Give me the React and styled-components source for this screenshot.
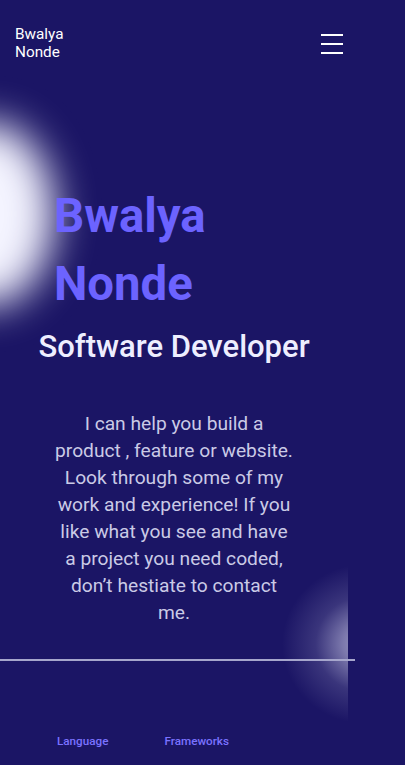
import React from "react"
import styled, { createGlobalStyle } from "styled-components"

// Global page styles:
const GlobalStyle = createGlobalStyle`
  html, body {
    margin: 0;
    padding: 0;
    background: #1b1565;
    overflow-x: hidden;
  }

  body {
    font-family: Roboto, "Liberation Sans", sans-serif;
    -webkit-font-smoothing: antialiased;
  }
`

const App = () => {
  return (
    <>
      <GlobalStyle />
      <Page>
        <GlowLeft />
        <GlowRight />
        <Header>
          <Logo>
            Bwalya
            <br />
            Nonde
          </Logo>
          <MenuButton aria-label="menu">
            <svg width="22" height="22" viewBox="0 0 22 22">
              <rect x="0" y="2" width="22" height="2" fill="#ffffff" />
              <rect x="0" y="11" width="22" height="2" fill="#ffffff" />
              <rect x="0" y="20" width="22" height="2" fill="#ffffff" />
            </svg>
          </MenuButton>
        </Header>

        <Hero>
          <Name>
            Bwalya
            <br />
            Nonde
          </Name>
          <Role>Software Developer</Role>
          <Intro>
            I can help you build a product , feature or website. Look through
            some of my work and experience! If you like what you see and have a
            project you need coded, don’t hestiate to contact me.
          </Intro>
        </Hero>

        <Divider />

        <Tabs>
          <Tab>Language</Tab>
          <Tab>Frameworks</Tab>
        </Tabs>
      </Page>
    </>
  )
}

export default App

const Page = styled.div`
  position: relative;
  width: 355px;
  min-height: 765px;
  color: #ffffff;
`

// soft light blob on the left edge
const GlowLeft = styled.div`
  position: absolute;
  left: -80px;
  top: 122px;
  width: 134px;
  height: 184px;
  border-radius: 50%;
  background: #f4f4ff;
  filter: blur(20px);
  pointer-events: none;
`

// cut-off glow behind the divider
const GlowRight = styled.div`
  position: absolute;
  left: 262px;
  top: 560px;
  width: 86px;
  height: 170px;
  pointer-events: none;
  background: radial-gradient(
    ellipse 84px 80px at 104px 84px,
    rgba(235, 235, 255, 0.68) 0%,
    rgba(235, 235, 255, 0.46) 28%,
    rgba(235, 235, 255, 0.15) 60%,
    rgba(235, 235, 255, 0) 100%
  );
`

const Header = styled.header`
  position: relative;
  display: flex;
  justify-content: space-between;
  align-items: center;
  padding: 25px 12px 0 15px;
`

const Logo = styled.div`
  font-size: 15.3px;
  line-height: 18px;
  color: #ffffff;
`

const MenuButton = styled.div`
  display: flex;
  width: 22px;
  height: 22px;
`

const Hero = styled.section`
  position: relative;
  width: 348px;
  padding-top: 122px;
`

const Name = styled.h1`
  margin: 0;
  padding-left: 54px;
  font-size: 47.3px;
  line-height: 67.5px;
  font-weight: 700;
  color: #6c63ff;
`

const Role = styled.h2`
  margin: 11px 0 0;
  text-align: center;
  font-size: 31px;
  line-height: 36px;
  font-weight: 500;
  color: #eeeeff;
`

const Intro = styled.p`
  width: 240px;
  margin: 45px auto 0;
  text-align: center;
  font-size: 19.2px;
  line-height: 27px;
  color: #cacae6;
`

const Divider = styled.hr`
  position: relative;
  width: 355px;
  height: 2px;
  margin: 33px 0 0;
  border: none;
  background: #a6a6cc;
`

const Tabs = styled.nav`
  display: flex;
  gap: 56px;
  padding: 73px 0 0 57px;
`

const Tab = styled.span`
  font-size: 11.7px;
  line-height: 14px;
  font-weight: 500;
  color: #7a72ff;
`
